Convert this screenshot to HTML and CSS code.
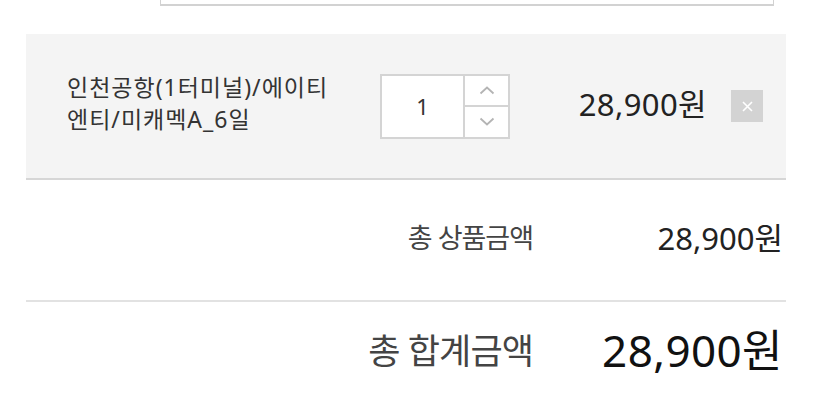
FILE: index.html
```html
<!DOCTYPE html>
<html lang="ko">
<head>
<meta charset="utf-8">
<title>장바구니</title>
<link rel="stylesheet" href="styles.css">
</head>
<body>
  <div class="option-field"></div>

  <section class="cart">
    <div class="item">
      <p class="item-name">인천공항(1터미널)/에이티<br>엔티/미캐멕A_6일</p>
      <div class="qty">
        <input class="qty-input" type="text" value="1" aria-label="수량">
        <div class="qty-btns">
          <button class="qty-btn" type="button" aria-label="수량 증가">
            <svg width="16" height="9" viewBox="0 0 16 9"><path d="M1.5 7.5 L8 1.5 L14.5 7.5" fill="none" stroke="#b4b4b4" stroke-width="1.8"/></svg>
          </button>
          <button class="qty-btn" type="button" aria-label="수량 감소">
            <svg width="16" height="9" viewBox="0 0 16 9"><path d="M1.5 1.5 L8 7.5 L14.5 1.5" fill="none" stroke="#b4b4b4" stroke-width="1.8"/></svg>
          </button>
        </div>
      </div>
      <span class="item-price">28,900원</span>
      <button class="remove" type="button" aria-label="삭제">
        <svg width="11" height="11" viewBox="0 0 11 11"><path d="M1 1 L10 10 M10 1 L1 10" stroke="#fff" stroke-width="1.6"/></svg>
      </button>
    </div>

    <div class="sum-row subtotal">
      <span class="sum-label">총 상품금액</span>
      <span class="sum-value">28,900원</span>
    </div>
    <div class="sum-row total">
      <span class="sum-label">총 합계금액</span>
      <span class="sum-value">28,900원</span>
    </div>
  </section>
</body>
</html>
```

FILE: styles.css
```css
html, body {
  margin: 0;
  padding: 0;
  background: #fff;
}

body {
  font-family: "Noto Sans", "Noto Sans CJK KR", sans-serif;
  color: #333;
}

/* option select box, scrolled mostly out of view */
.option-field {
  box-sizing: border-box;
  width: 614px;
  height: 40px;
  margin: -34px 0 0 160px;
  border: 1px solid #d2d2d2;
  border-bottom-width: 2px;
  background: #fff;
}

.cart {
  width: 760px;
  margin: 28px 0 0 26px;
}

.item {
  box-sizing: border-box;
  display: flex;
  align-items: center;
  height: 146px;
  padding: 0 23px 0 41px;
  background: #f4f4f4;
  border-bottom: 2px solid #d6d6d6;
}

.item-name {
  flex: 0 0 313px;
  margin: 0 0 6px;
  font-size: 23px;
  line-height: 32px;
  letter-spacing: 1px;
  color: #333;
}

.qty {
  box-sizing: border-box;
  display: flex;
  width: 130px;
  height: 65px;
  border: 2px solid #d4d4d4;
  background: #fff;
}

.qty-input {
  box-sizing: border-box;
  width: 83px;
  height: 100%;
  margin: 0;
  padding: 0;
  border: 0;
  border-right: 2px solid #d4d4d4;
  background: #fff;
  font-family: inherit;
  font-size: 22px;
  color: #333;
  text-align: center;
  outline: none;
}

.qty-btns {
  flex: 1;
  display: flex;
  flex-direction: column;
}

.qty-btn {
  flex: 1;
  display: flex;
  align-items: center;
  justify-content: center;
  margin: 0;
  padding: 0;
  border: 0;
  background: #fff;
}

.qty-btn + .qty-btn {
  border-top: 2px solid #d4d4d4;
}

.item-price {
  flex: 1;
  margin-bottom: 8px;
  text-align: right;
  font-size: 31px;
  letter-spacing: 0.4px;
  color: #222;
}

.remove {
  display: flex;
  align-items: center;
  justify-content: center;
  width: 32px;
  height: 32px;
  margin: 0 0 0 24px;
  padding: 0;
  border: 0;
  background: #d3d3d3;
}

.sum-row {
  display: flex;
  align-items: center;
}

.sum-label {
  box-sizing: border-box;
  width: 507px;
  text-align: right;
  color: #444;
}

.sum-value {
  flex: 1;
  padding-right: 3px;
  text-align: right;
}

.subtotal {
  height: 122px;
  padding-bottom: 8px;
  box-sizing: border-box;
  border-bottom: 2px solid #e2e2e2;
}

.subtotal .sum-label {
  font-size: 27px;
  letter-spacing: -1px;
}

.subtotal .sum-value {
  font-size: 31px;
  color: #222;
}

.total {
  height: 92px;
}

.total .sum-label {
  font-size: 35px;
  letter-spacing: -0.9px;
}

.total .sum-value {
  font-size: 44px;
  letter-spacing: 0.4px;
  color: #111;
}
```
